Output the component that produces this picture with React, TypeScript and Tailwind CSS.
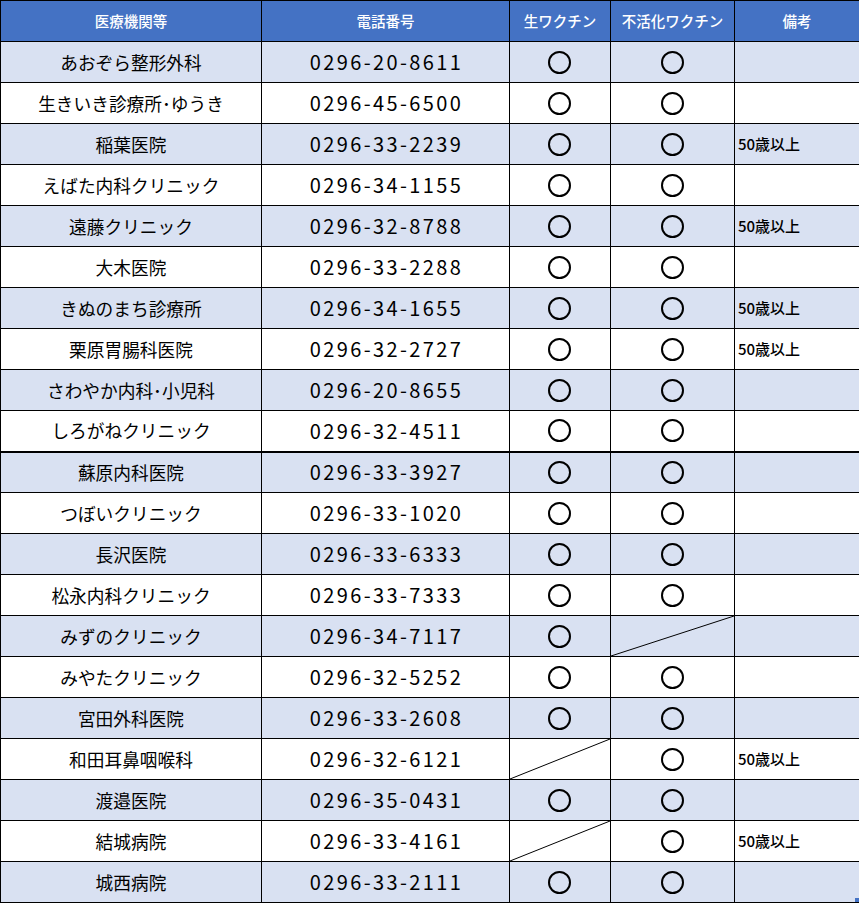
const rows: [string, string, string, string, string][] = [
  ['あおぞら整形外科', '0296-20-8611', 'o', 'o', ''],
  ['生きいき診療所･ゆうき', '0296-45-6500', 'o', 'o', ''],
  ['稲葉医院', '0296-33-2239', 'o', 'o', '50歳以上'],
  ['えばた内科クリニック', '0296-34-1155', 'o', 'o', ''],
  ['遠藤クリニック', '0296-32-8788', 'o', 'o', '50歳以上'],
  ['大木医院', '0296-33-2288', 'o', 'o', ''],
  ['きぬのまち診療所', '0296-34-1655', 'o', 'o', '50歳以上'],
  ['栗原胃腸科医院', '0296-32-2727', 'o', 'o', '50歳以上'],
  ['さわやか内科･小児科', '0296-20-8655', 'o', 'o', ''],
  ['しろがねクリニック', '0296-32-4511', 'o', 'o', ''],
  ['蘇原内科医院', '0296-33-3927', 'o', 'o', ''],
  ['つぼいクリニック', '0296-33-1020', 'o', 'o', ''],
  ['長沢医院', '0296-33-6333', 'o', 'o', ''],
  ['松永内科クリニック', '0296-33-7333', 'o', 'o', ''],
  ['みずのクリニック', '0296-34-7117', 'o', '/', ''],
  ['みやたクリニック', '0296-32-5252', 'o', 'o', ''],
  ['宮田外科医院', '0296-33-2608', 'o', 'o', ''],
  ['和田耳鼻咽喉科', '0296-32-6121', '/', 'o', '50歳以上'],
  ['渡邉医院', '0296-35-0431', 'o', 'o', ''],
  ['結城病院', '0296-33-4161', '/', 'o', '50歳以上'],
  ['城西病院', '0296-33-2111', 'o', 'o', ''],
];

function Mark({ v }: { v: string }) {
  if (v === 'o') {
    return <span className="mx-auto block h-[23px] w-[23px] rounded-full border-[2.6px] border-black" />;
  }
  // 斜線 (対象外)
  return (
    <svg className="absolute inset-0 h-full w-full" preserveAspectRatio="none" viewBox="0 0 100 100">
      <line x1="0" y1="100" x2="100" y2="0" stroke="black" strokeWidth="1" vectorEffect="non-scaling-stroke" />
    </svg>
  );
}

export default function App() {
  return (
    <div className="relative w-[859px] bg-white" style={{ fontFamily: '"Noto Sans CJK JP", "Noto Sans", sans-serif' }}>
      <table className="w-[859px] table-fixed border-collapse text-black">
        <colgroup>
          <col className="w-[261px]" />
          <col className="w-[248px]" />
          <col className="w-[101px]" />
          <col className="w-[124px]" />
          <col className="w-[125px]" />
        </colgroup>
        <thead>
          <tr className="h-[41px] bg-[#4472c4] text-[14.5px] text-white">
            <th className="border border-black p-0 font-medium">医療機関等</th>
            <th className="border border-black p-0 font-medium">電話番号</th>
            <th className="border border-black p-0 font-medium">生ワクチン</th>
            <th className="border border-black p-0 font-medium">不活化ワクチン</th>
            <th className="border border-black p-0 font-medium">備考</th>
          </tr>
        </thead>
        <tbody>
          {rows.map((r, i) => (
            <tr
              key={r[0]}
              className={`h-[41px] ${i % 2 === 0 ? 'bg-[#d9e1f2]' : 'bg-white'} ${i === 9 ? 'border-b-2' : ''}`}
            >
              <td className="border border-black p-0 text-center text-[17.7px]">{r[0]}</td>
              <td className="border border-black p-0 pl-[2px] text-center text-[20px] tracking-[2.4px]">{r[1]}</td>
              <td className="relative border border-black p-0 pr-[2px]">
                <Mark v={r[2]} />
              </td>
              <td className="relative border border-black p-0">
                <Mark v={r[3]} />
              </td>
              <td className="border border-black py-0 pl-[3px] text-[15px] font-medium">{r[4]}</td>
            </tr>
          ))}
        </tbody>
      </table>
      <span className="absolute bottom-[1px] right-0 h-[4px] w-[4px] bg-[#4472c4]" />
    </div>
  );
}
